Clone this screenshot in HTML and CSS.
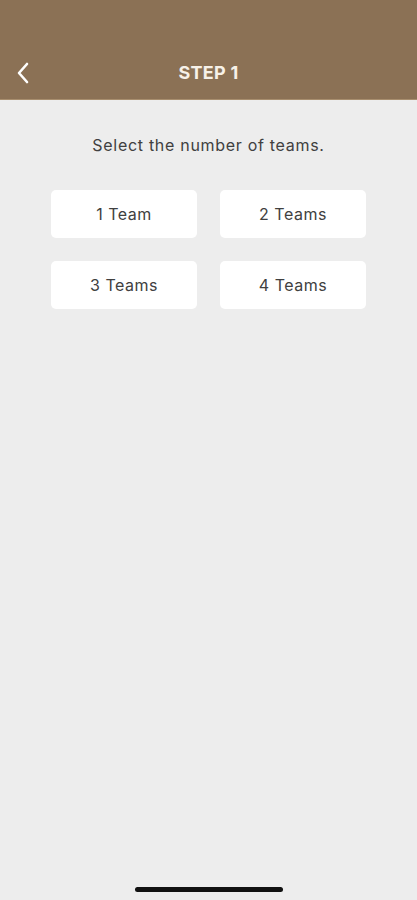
FILE: index.html
```html
<!DOCTYPE html>
<html lang="en">
<head>
    <meta charset="UTF-8">
    <meta name="viewport" content="width=device-width, initial-scale=1.0">
    <title>Step 1</title>
    <link rel="stylesheet" href="styles.css">
</head>
<body>

    <div class="app">
        <header class="topbar">
            <button class="back" aria-label="Back">
                <svg width="14" height="22" viewBox="0 0 14 22">
                    <path d="M11 2 L3 11 L11 20" fill="none" stroke="#fff" stroke-width="2.6" stroke-linecap="round" stroke-linejoin="round"/>
                </svg>
            </button>
            <h1 class="title">STEP 1</h1>
        </header>

        <main class="content">
            <p class="prompt">Select the number of teams.</p>
            <div class="teams">
                <button class="team">1 Team</button>
                <button class="team">2 Teams</button>
                <button class="team">3 Teams</button>
                <button class="team">4 Teams</button>
            </div>
        </main>

        <div class="home-bar"></div>
    </div>

</body>
</html>
```

FILE: styles.css
```css
body {
    margin: 0;
    font-family: 'Inter', 'Liberation Sans', sans-serif;
    background-color: #ededed;
}

.app {
    display: flex;
    flex-direction: column;
    height: 900px;
}

.topbar {
    position: relative;
    height: 100px;
    box-sizing: border-box;
    padding-top: 56px;
    background-color: #8b7155;
    border-bottom: 1px solid #a88e6e;
    display: flex;
    justify-content: center;
}

.back {
    position: absolute;
    left: 12px;
    top: 62px;
    background: none;
    border: 0;
    padding: 0;
    width: 22px;
    height: 22px;
}

.title {
    margin: 0;
    font-size: 18px;
    font-weight: 700;
    line-height: 34px;
    color: #f7f1e8;
    letter-spacing: 0.3px;
}

.content {
    flex: 1;
    display: flex;
    flex-direction: column;
    align-items: center;
    padding-top: 34px;
}

.prompt {
    margin: 0 0 34px 0;
    font-size: 16px;
    line-height: 22px;
    color: #404040;
    letter-spacing: 0.7px;
}

.teams {
    display: grid;
    grid-template-columns: 146px 146px;
    gap: 23px;
}

.team {
    height: 48px;
    border: 0;
    border-radius: 5px;
    background-color: #fff;
    font-family: inherit;
    font-size: 16px;
    color: #404040;
    letter-spacing: 0.5px;
}

.home-bar {
    width: 148px;
    height: 5px;
    border-radius: 3px;
    background-color: #111;
    margin: 0 auto 8px;
}
```
